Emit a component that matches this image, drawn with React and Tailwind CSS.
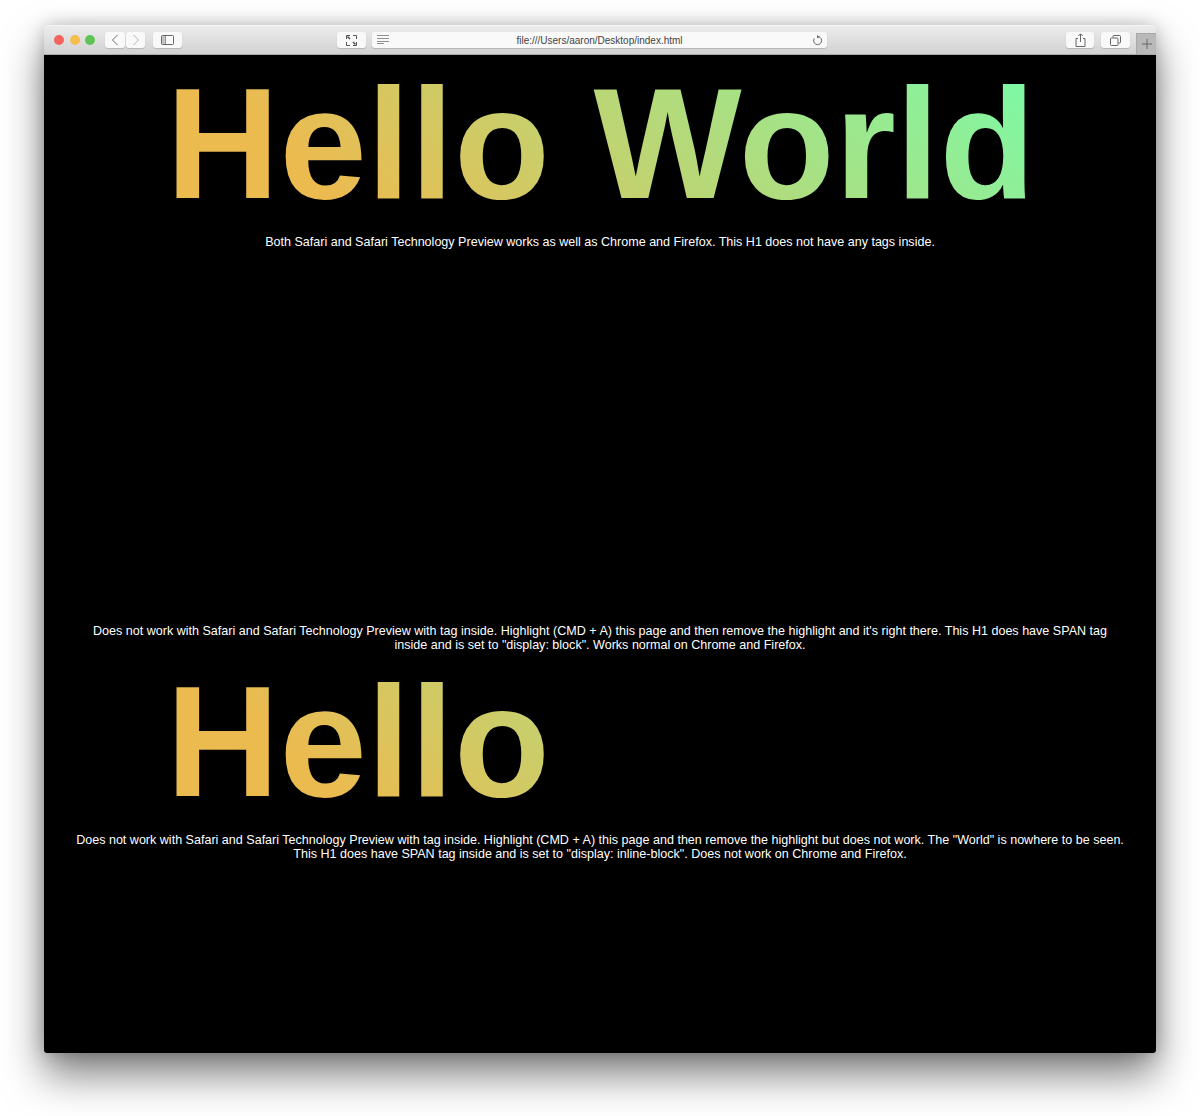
import React from 'react';

const buttonClass = 'h-4 flex items-center justify-center rounded-[3px] bg-[#f9f9f9] shadow-[0_1px_1px_rgba(0,0,0,0.16)]';
const headingClass = 'w-[872px] ml-[122px] whitespace-nowrap font-bold text-[157px] leading-[180px] bg-[linear-gradient(45deg,#ebbb50_20%,#7ff8a4_96%)] bg-clip-text text-transparent';
const noteClass = 'px-[31.5px] text-center text-white text-[12.55px] leading-[14px]';

function Toolbar() {
  return (
    <div className="relative h-[30px] flex items-center pl-[10px] bg-gradient-to-b from-[#ececec] to-[#d2d2d2] border-t border-t-[#f5f5f5] border-b border-b-[#a9a9a9]">
      <div className="flex items-center gap-[5.5px]">
        <span className="w-[10px] h-[10px] rounded-full bg-[#f3645c]" />
        <span className="w-[10px] h-[10px] rounded-full bg-[#f6bd4f]" />
        <span className="w-[10px] h-[10px] rounded-full bg-[#5fc454]" />
      </div>
      <div className={`${buttonClass} w-[20px] ml-[10px]`}>
        <svg width="8" height="12" viewBox="0 0 8 12" fill="none" stroke="#666" strokeWidth="1"><path d="M6.5 1 1.500 6l5 5" /></svg>
      </div>
      <div className={`${buttonClass} w-[19px] ml-[1px]`}>
        <svg width="8" height="12" viewBox="0 0 8 12" fill="none" stroke="#b0b0b0" strokeWidth="1"><path d="M1.500 1 6.500 6l-5 5" /></svg>
      </div>
      <div className={`${buttonClass} w-[29px] ml-[8px]`}>
        <svg width="13" height="10" viewBox="0 0 13 10" fill="none" stroke="#666"><rect x="0.5" y="0.5" width="12" height="9" rx="1" /><path d="M4.500 1v8" /><path d="M1 1h3.500v8H1z" fill="#c4c4c4" stroke="none" /></svg>
      </div>
      <div className={`${buttonClass} w-[29px] ml-[155px]`}>
        <svg width="11" height="11" viewBox="0 0 11 11" fill="none" stroke="#555"><path d="M.5 4V.5H4M7 .5h3.500V4M.5 7v3.500H4M7 10.500h3.500V7" /><path d="M1.500 1.500 4 4M7 7l2.500 2.500" strokeWidth="1.6" /></svg>
      </div>
      <div className={`${buttonClass} relative w-[455px] ml-[6px]`}>
        <svg className="absolute left-[5px] top-[3px]" width="12" height="9" viewBox="0 0 12 9" stroke="#777"><path d="M0 .5h12M0 3.500h12M0 6.500h12M0 8.500h7" strokeWidth="0.8" /></svg>
        <span className="translate-y-px text-[10px] leading-4 text-[#444]">file:///Users/aaron/Desktop/index.html</span>
        <svg className="absolute right-[4px] top-[2.5px]" width="11" height="11" viewBox="0 0 11 11" fill="none" stroke="#666"><path d="M6.500 1.700A4 4 0 1 1 2.300 3.400" /><path d="M5 0v3.600l2.600-1.800z" fill="#666" stroke="none" /></svg>
      </div>
      <div className={`${buttonClass} w-[28px] ml-[239px]`}>
        <svg width="11" height="14" viewBox="0 0 11 14" fill="none" stroke="#666"><path d="M3 5.500H1v8h9v-8H8M5.500 9V1M3.300 3 5.500.8 7.700 3" /></svg>
      </div>
      <div className={`${buttonClass} w-[29px] ml-[7px]`}>
        <svg width="11" height="11" viewBox="0 0 11 11" fill="none" stroke="#666"><rect x="0.5" y="3" width="7.500" height="7.500" rx="1" /><path d="M3 2.500V1.500a1 1 0 0 1 1-1h5.500a1 1 0 0 1 1 1V7a1 1 0 0 1-1 1H8.500" /></svg>
      </div>
      <div className="absolute right-0 bottom-0 w-5 h-[21px] flex items-center justify-center bg-[#b9b9b9] border-l border-t border-[#a9a9a9]">
        <svg width="10" height="10" viewBox="0 0 10 10" stroke="#666"><path d="M5 0v10M0 5h10" /></svg>
      </div>
    </div>
  );
}

export default function App() {
  return (
    <div className="w-[1200px] h-[1116px] bg-white pt-[25px] pl-[44px] overflow-hidden font-['Liberation_Sans',Arial,sans-serif]">
      <div className="w-[1112px] h-[1028px] flex flex-col rounded-t-[5px] rounded-b-[3px] overflow-hidden shadow-[0_22px_40px_rgba(0,0,0,0.5),0_0_18px_rgba(0,0,0,0.22)]">
        <Toolbar />
        <div className="flex-1 bg-black pt-[1px]">
          <h1 className={`${headingClass} -mt-[2px]`}>Hello World</h1>
          <p className={`${noteClass} mt-[1px]`}>
            Both Safari and Safari Technology Preview works as well as Chrome and Firefox. This H1 does not have any tags inside.
          </p>
          <p className={`${noteClass} mt-[375px]`}>
            Does not work with Safari and Safari Technology Preview with tag inside. Highlight (CMD + A) this page and then remove the highlight and it's right there. This H1 does have SPAN tag inside and is set to "display: block". Works normal on Chrome and Firefox.
          </p>
          <h1 className={headingClass}>Hello</h1>
          <p className={`${noteClass} mt-[1px]`}>
            Does not work with Safari and Safari Technology Preview with tag inside. Highlight (CMD + A) this page and then remove the highlight but does not work. The "World" is nowhere to be seen. This H1 does have SPAN tag inside and is set to "display: inline-block". Does not work on Chrome and Firefox.
          </p>
        </div>
      </div>
    </div>
  );
}
